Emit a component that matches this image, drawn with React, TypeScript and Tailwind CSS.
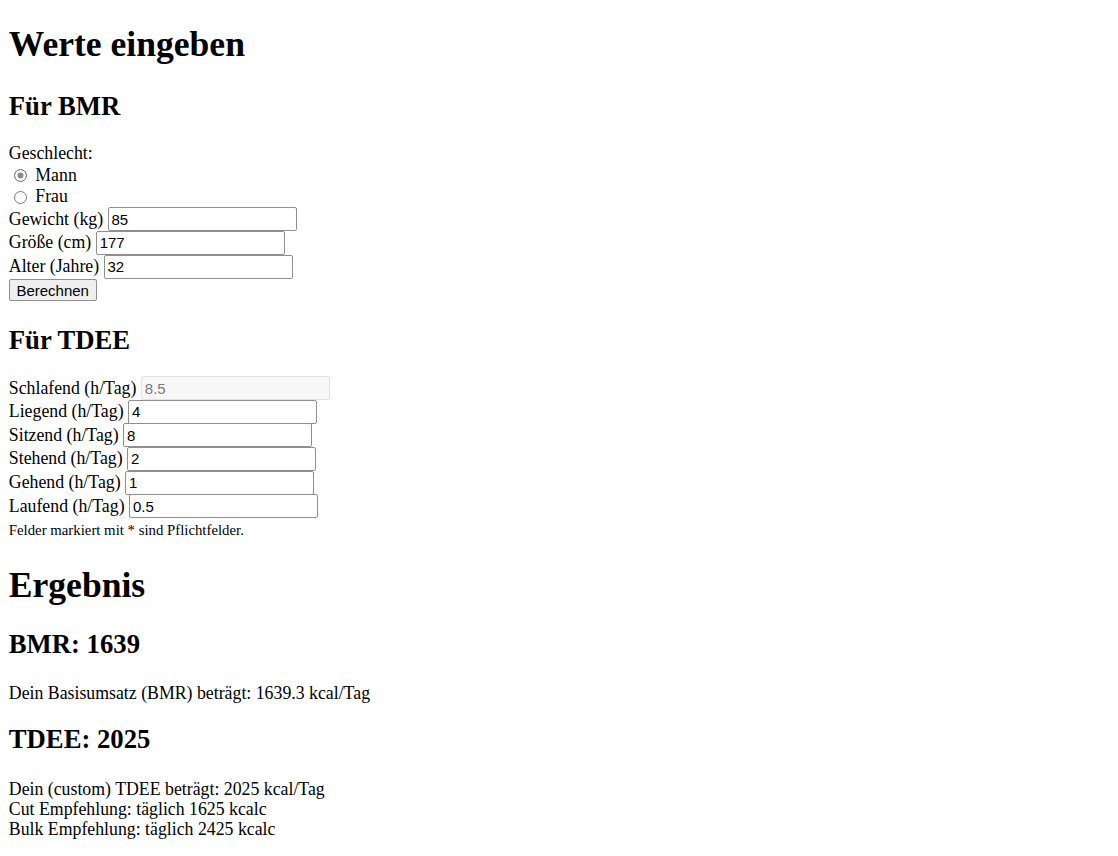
import React from "react"

const inputBase =
    "inline-block align-middle h-[24px] w-[189px] border rounded-[2px] px-[3px] font-['Liberation_Sans',Arial,sans-serif] text-[15px] leading-[normal] outline-none"

function Field({ label, value, disabled }: { label: string; value: string; disabled?: boolean }) {
    return (
        <div className="flex items-center h-[23.6px] gap-[4.4px]">
            <label>{label}</label>
            <input
                type="text"
                defaultValue={value}
                disabled={disabled}
                className={
                    disabled
                        ? inputBase + " bg-[#f7f7f7] border-[#e3e3e3] text-[#7a7a7a]"
                        : inputBase + " bg-white border-[#8f8f8f] text-black"
                }
            />
        </div>
    )
}

function Radio({ label, checked }: { label: string; checked?: boolean }) {
    return (
        <div className="flex items-center h-[21.6px]">
            <input
                type="radio"
                name="geschlecht"
                defaultChecked={checked}
                className="appearance-none ml-[5px] mr-[8.5px] mt-[1px] w-[13px] h-[13px] rounded-full border border-[#7a7a7a] bg-white checked:bg-[#8a8a8a] checked:shadow-[inset_0_0_0_2.5px_white]"
            />
            <label>{label}</label>
        </div>
    )
}

export default function App() {
    return (
        <div className="min-h-[856px] bg-white text-black px-[8.8px] pb-4 font-['Liberation_Serif','Times_New_Roman',serif] text-[17.8px] leading-[normal]">
            <h1 className="text-[35.6px] font-bold leading-[normal] pt-[22.6px]">Werte eingeben</h1>

            <form onSubmit={e => e.preventDefault()}>
                <h2 className="text-[26.7px] font-bold leading-[normal] mt-[26.8px]">Für BMR</h2>

                <div className="mt-[21px]">Geschlecht:</div>
                <Radio label="Mann" checked />
                <Radio label="Frau" />
                <div>
                    <Field label="Gewicht (kg)" value="85" />
                    <Field label="Größe (cm)" value="177" />
                    <Field label="Alter (Jahre)" value="32" />
                </div>
                <div className="h-[23.5px] flex items-center">
                    <button
                        type="submit"
                        className="h-[22px] px-[6.6px] bg-[#efefef] border border-[#8f8f8f] rounded-[2px] font-['Liberation_Sans',Arial,sans-serif] text-[15px] leading-[normal]"
                    >
                        Berechnen
                    </button>
                </div>

                {/* TDEE Felder */}
                <h2 className="text-[26.7px] font-bold leading-[normal] mt-[23.5px]">Für TDEE</h2>
                <div className="mt-[20px]">
                    <Field label="Schlafend (h/Tag)" value="8.5" disabled />
                    <Field label="Liegend (h/Tag)" value="4" />
                    <Field label="Sitzend (h/Tag)" value="8" />
                    <Field label="Stehend (h/Tag)" value="2" />
                    <Field label="Gehend (h/Tag)" value="1" />
                    <Field label="Laufend (h/Tag)" value="0.5" />
                </div>
                <small className="block text-[14.8px] leading-[normal] mt-[4px]">
                    Felder markiert mit * sind Pflichtfelder.
                </small>
            </form>

            <h1 className="text-[35.6px] font-bold leading-[normal] mt-[25.5px]">Ergebnis</h1>

            <h2 className="text-[26.7px] font-bold leading-[normal] mt-[22.2px]">BMR: 1639</h2>
            <p className="mt-[23px]">Dein Basisumsatz (BMR) beträgt: 1639.3 kcal/Tag</p>

            <h2 className="text-[26.7px] font-bold leading-[normal] mt-[20.6px]">TDEE: 2025</h2>
            <p className="mt-[23.4px] leading-[20px]">
                Dein (custom) TDEE beträgt: 2025 kcal/Tag
                <br />
                Cut Empfehlung: täglich 1625 kcalc
                <br />
                Bulk Empfehlung: täglich 2425 kcalc
            </p>
        </div>
    )
}
